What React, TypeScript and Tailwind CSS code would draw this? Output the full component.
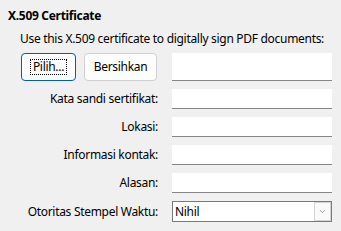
import { ChevronDown } from 'lucide-react'

const font = { fontFamily: '"Noto Sans", "Liberation Sans", sans-serif' }

function Field() {
  return <div className="h-[20px] bg-white border-b border-[#868686]" />
}

function Row({ label, children }: { label: string; children: React.ReactNode }) {
  return (
    <>
      <div className="flex items-center justify-end h-[20px] whitespace-nowrap">{label}</div>
      {children}
    </>
  )
}

export default function App() {
  return (
    <div
      className="w-[341px] h-[231px] bg-[#f0f0f0] text-[12px] leading-[16px] tracking-[-0.3px] text-black overflow-hidden"
      style={font}
    >
      <div className="pl-[8px] pt-[8px] font-bold">X.509 Certificate</div>
      <div className="pl-[20px] pt-[7px] whitespace-nowrap">
        Use this X.509 certificate to digitally sign PDF documents:
      </div>
      <div className="pl-[21px] pt-[6px] grid grid-cols-[137px_160px] gap-x-[14px] gap-y-[8px]">
        <div className="flex gap-[8px] h-[28px]">
          <button className="w-[55px] h-[28px] bg-[#fdfdfd] border border-[#005fb8] rounded-[4px] flex items-center justify-center">
            <span className="outline outline-1 outline-dotted outline-black px-[2px] leading-[14px]">Pilih...</span>
          </button>
          <button className="w-[73px] h-[28px] bg-[#fdfdfd] border border-[#d0d0d0] rounded-[4px] flex items-center justify-center">
            Bersihkan
          </button>
        </div>
        <div className="h-[28px] bg-white border-b border-[#868686]" />
        <Row label="Kata sandi sertifikat:">
          <Field />
        </Row>
        <Row label="Lokasi:">
          <Field />
        </Row>
        <Row label="Informasi kontak:">
          <Field />
        </Row>
        <Row label="Alasan:">
          <Field />
        </Row>
        <div className="flex items-center justify-end h-[21px] whitespace-nowrap">Otoritas Stempel Waktu:</div>
        <div className="h-[21px] bg-white border border-[#7a7a7a] flex items-center pl-[2px]">
          <span className="flex-1">Nihil</span>
          <span className="w-[17px] h-[19px] border border-[#d4d4d4] bg-[#fafafa] flex items-center justify-center">
            <ChevronDown className="w-[9px] h-[9px] text-[#666]" strokeWidth={1.5} />
          </span>
        </div>
      </div>
    </div>
  )
}
